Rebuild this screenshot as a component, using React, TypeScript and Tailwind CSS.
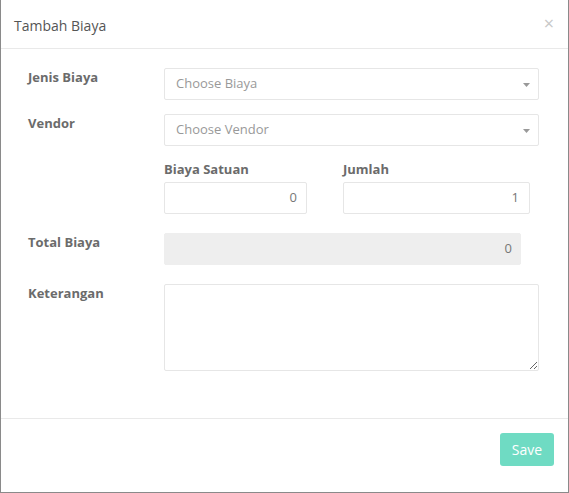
import React from "react";

const font = { fontFamily: '"Open Sans", "Noto Sans", sans-serif' };

function SelectBox({ placeholder }: { placeholder: string }) {
  return (
    <div className="flex h-[32px] w-[375px] items-center justify-between rounded-[2px] border border-[#e6e6e6] bg-white pl-[11px] pr-[8px]">
      <span className="text-[13px] text-[#999]">{placeholder}</span>
      <svg width="7" height="4" viewBox="0 0 7 4" className="mt-[1px]">
        <path d="M0 0h7L3.5 4z" fill="#999" />
      </svg>
    </div>
  );
}

function Label({ children }: { children: React.ReactNode }) {
  return (
    <div className="w-[136px] shrink-0 text-[13px] font-bold leading-[18px] text-[#6b6b6b]">
      {children}
    </div>
  );
}

export default function App() {
  return (
    <div
      style={font}
      className="flex h-[493px] w-[569px] flex-col border-x border-b border-[#8a8a8a] bg-white"
    >
      <div className="flex h-[49px] shrink-0 items-center justify-between border-b border-[#e9e9e9] pl-[13px] pr-[14px] pt-[3px]">
        <h4 className="text-[14px] text-[#555]">Tambah Biaya</h4>
        <span className="mb-[5px] text-[18px] leading-none text-[#c8c8c8]">×</span>
      </div>

      <div className="flex-1 pl-[27px] pt-[19px]">
        <div className="flex">
          <Label>Jenis Biaya</Label>
          <SelectBox placeholder="Choose Biaya" />
        </div>

        <div className="mt-[14px] flex">
          <Label>Vendor</Label>
          <SelectBox placeholder="Choose Vendor" />
        </div>

        <div className="mt-[14px] flex">
          <div className="w-[136px] shrink-0" />
          <div className="flex gap-[36px]">
            <div className="w-[143px]">
              <div className="mb-[4px] text-[13px] font-bold leading-[18px] text-[#6b6b6b]">
                Biaya Satuan
              </div>
              <div className="flex h-[32px] items-center justify-end rounded-[2px] border border-[#e6e6e6] pr-[9px] text-[13px] text-[#777]">
                0
              </div>
            </div>
            <div className="w-[187px]">
              <div className="mb-[4px] text-[13px] font-bold leading-[18px] text-[#6b6b6b]">
                Jumlah
              </div>
              <div className="flex h-[32px] items-center justify-end rounded-[2px] border border-[#e6e6e6] pr-[10px] text-[13px] text-[#777]">
                1
              </div>
            </div>
          </div>
        </div>

        <div className="mt-[19px] flex">
          <Label>Total Biaya</Label>
          <div className="flex h-[32px] w-[357px] items-center justify-end rounded-[2px] border border-[#eeeeee] bg-[#eeeeee] pr-[8px] text-[13px] text-[#777]">
            0
          </div>
        </div>

        <div className="mt-[19px] flex">
          <Label>Keterangan</Label>
          <textarea className="h-[87px] w-[375px] resize-y rounded-[2px] border border-[#e6e6e6] outline-none" />
        </div>
      </div>

      <div className="flex h-[74px] shrink-0 justify-end border-t border-[#e9e9e9] pr-[14px] pt-[14px]">
        <button className="h-[33px] w-[54px] rounded-[3px] bg-[#6fdbc3] text-[14px] text-white">
          Save
        </button>
      </div>
    </div>
  );
}
